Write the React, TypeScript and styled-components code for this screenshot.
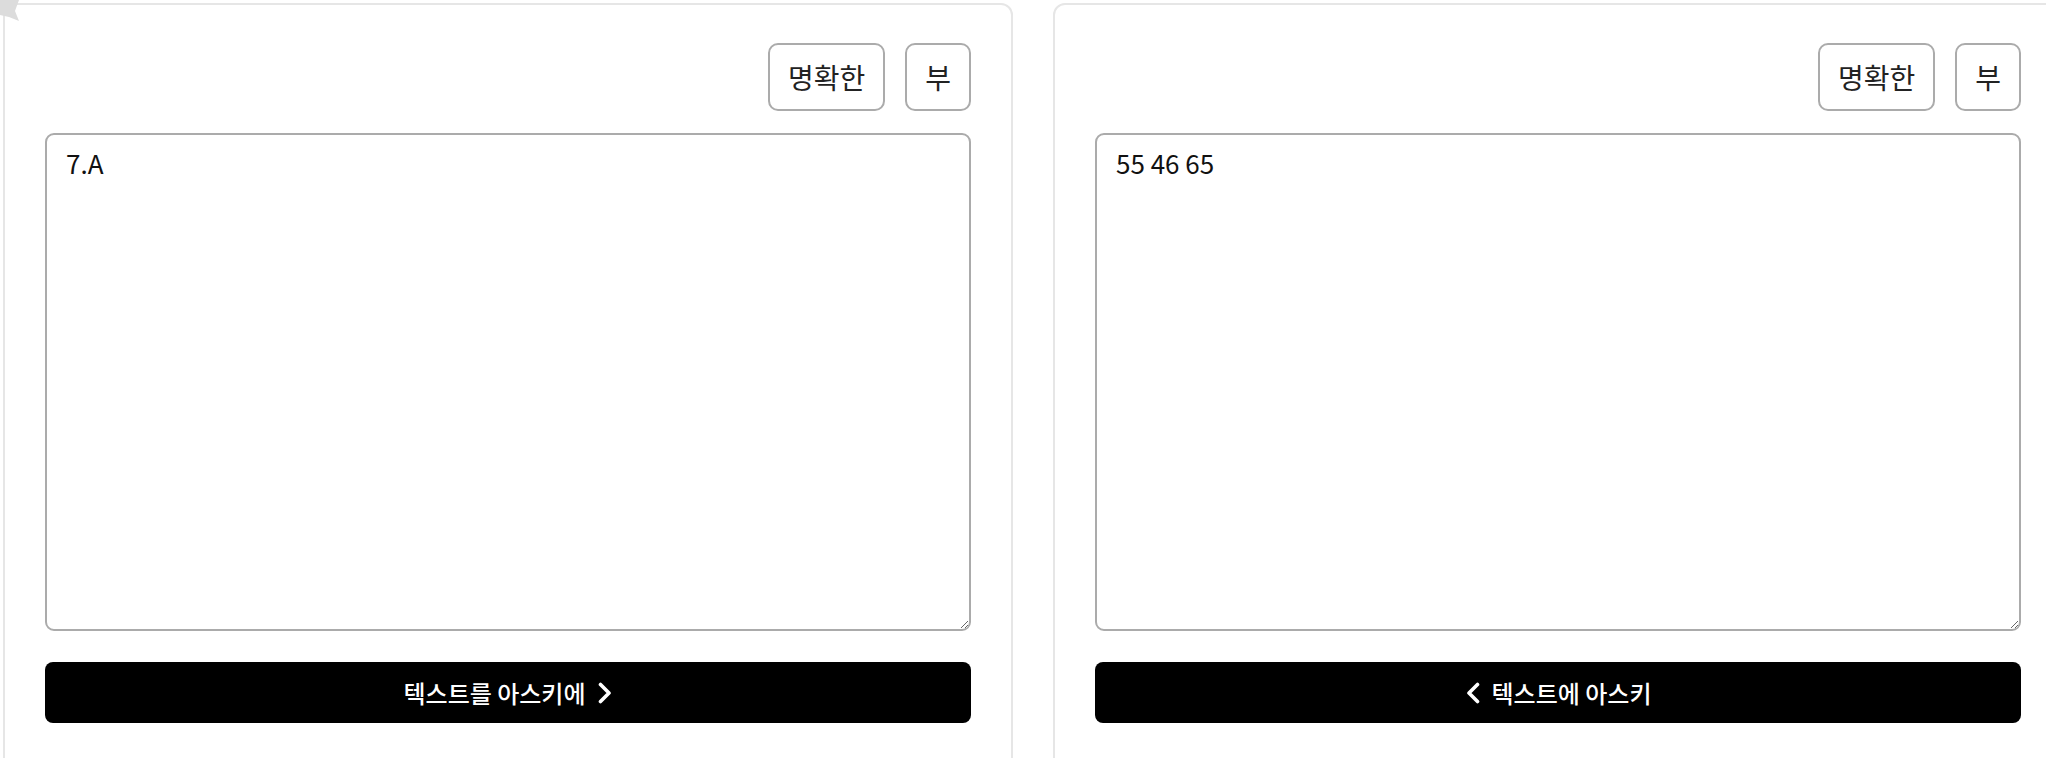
import React, { useState } from 'react';
import styled, { createGlobalStyle } from 'styled-components';

const GlobalStyle = createGlobalStyle`
  html, body {
    margin: 0;
    padding: 0;
    background: #fff;
    overflow: hidden;
  }
  body {
    font-family: "Noto Sans CJK KR", "Noto Sans", sans-serif;
    color: #111;
  }
`;

const Page = styled.div`
  position: relative;
  display: flex;
  gap: 40px;
  padding: 3px 0 0 3px;
  width: max-content;
`;

const CornerMark = styled.svg`
  position: absolute;
  left: 0;
  top: 0;
  width: 22px;
  height: 24px;
`;

const Card = styled.section`
  box-sizing: border-box;
  width: 1010px;
  height: 800px;
  flex: none;
  border: 2px solid #e6e6e6;
  border-radius: 12px;
  padding: 38px 40px 40px;
  display: flex;
  flex-direction: column;
`;

const Toolbar = styled.div`
  display: flex;
  justify-content: flex-end;
  gap: 20px;
  margin-bottom: 22px;
`;

const ToolButton = styled.button`
  box-sizing: border-box;
  height: 68px;
  padding: 0 18px;
  border: 2px solid #ababab;
  border-radius: 10px;
  background: #fff;
  font-family: inherit;
  font-size: 28px;
  color: #222;
  cursor: pointer;
`;

const TextBox = styled.textarea`
  box-sizing: border-box;
  width: 100%;
  height: 498px;
  padding: 8px 19px;
  border: 2px solid #ababab;
  border-radius: 9px;
  font-family: inherit;
  font-size: 26px;
  line-height: 1.5;
  color: #111;
  resize: vertical;
  outline: none;
`;

const ConvertButton = styled.button`
  margin-top: 31px;
  height: 61px;
  width: 100%;
  border: none;
  border-radius: 8px;
  background: #000;
  color: #fff;
  font-family: inherit;
  font-size: 24px;
  font-weight: 500;
  display: flex;
  align-items: center;
  justify-content: center;
  gap: 11px;
  cursor: pointer;
`;

const Chevron = ({ dir }: { dir: 'left' | 'right' }) => (
  <svg width="16" height="22" viewBox="0 0 16 22" fill="none">
    <path
      d={dir === 'right' ? 'M3.5 2.5 L12 11 L3.5 19.5' : 'M12.5 2.5 L4 11 L12.5 19.5'}
      stroke="#fff"
      strokeWidth="3.6"
      strokeLinecap="round"
      strokeLinejoin="round"
    />
  </svg>
);

type PanelProps = {
  value: string;
  onChange: (v: string) => void;
  label: string;
  dir: 'left' | 'right';
};

const Panel = ({ value, onChange, label, dir }: PanelProps) => (
  <Card>
    <Toolbar>
      <ToolButton onClick={() => onChange('')}>명확한</ToolButton>
      <ToolButton>부</ToolButton>
    </Toolbar>
    <TextBox value={value} onChange={(e) => onChange(e.target.value)} spellCheck={false} />
    <ConvertButton>
      {dir === 'left' && <Chevron dir="left" />}
      <span>{label}</span>
      {dir === 'right' && <Chevron dir="right" />}
    </ConvertButton>
  </Card>
);

const App = () => {
  const [text, setText] = useState('7.A');
  const [ascii, setAscii] = useState('55 46 65');
  return (
    <>
      <GlobalStyle />
      <Page>
        <CornerMark viewBox="0 0 22 24">
          <polygon points="0,0 19,0 15,11 19,21 9,17 0,15" fill="#dcdcdc" />
        </CornerMark>
        <Panel value={text} onChange={setText} label="텍스트를 아스키에" dir="right" />
        <Panel value={ascii} onChange={setAscii} label="텍스트에 아스키" dir="left" />
      </Page>
    </>
  );
};

export default App;
